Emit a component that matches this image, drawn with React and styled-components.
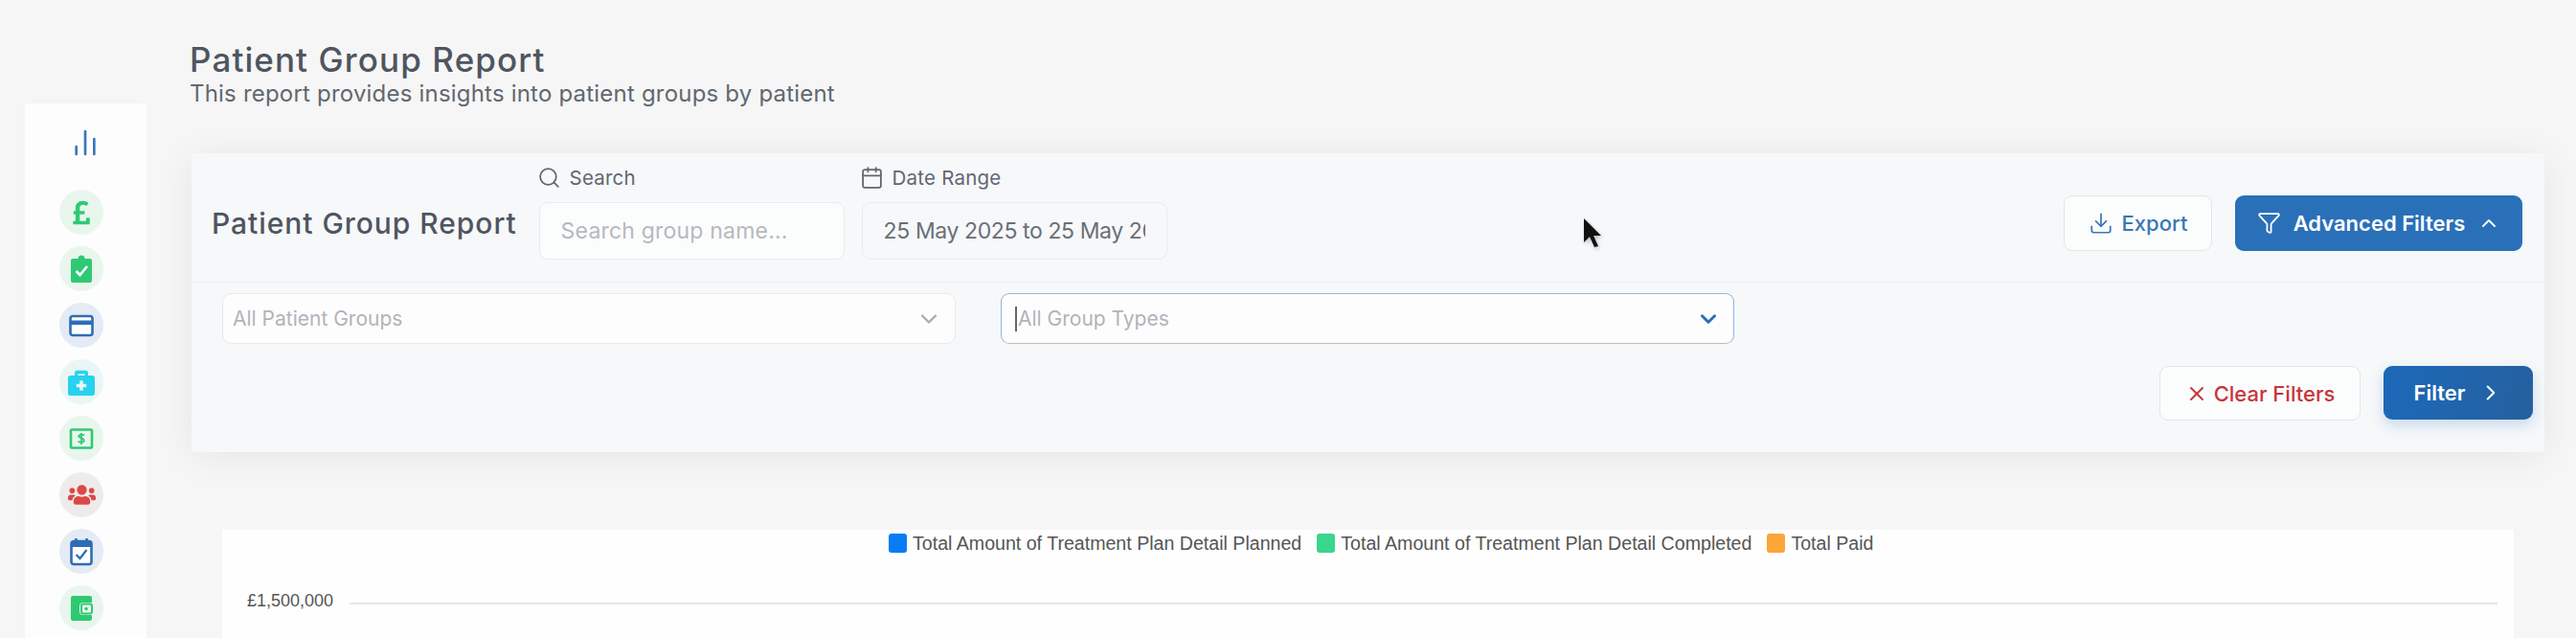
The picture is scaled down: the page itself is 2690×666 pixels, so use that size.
import React from "react";
import styled, { createGlobalStyle } from "styled-components";
import { Search, Calendar, Download, Funnel, ChevronUp, ChevronDown, ChevronRight, X, ChartNoAxesColumn } from "lucide-react";
import { FaPoundSign, FaBriefcaseMedical, FaUsers } from "react-icons/fa";

const GlobalStyle = createGlobalStyle`
  html, body {
    margin: 0;
    padding: 0;
    background: #f6f6f6;
  }
  * {
    box-sizing: border-box;
  }
`;

const Page = styled.div`
  display: flex;
  width: 2690px;
  height: 666px;
  overflow: hidden;
  position: relative;
  background: #f6f6f6;
  font-family: Inter, "Open Sans", sans-serif;
`;

const Sidebar = styled.nav`
  width: 127px;
  height: 558px;
  margin: 108px 0 0 26px;
  padding: 25px 0 0 36px;
  display: flex;
  flex-direction: column;
  flex-shrink: 0;
  background: #fdfdfd;
  box-shadow: 0 0 14px rgba(0, 0, 0, 0.015);
`;

const ChartLink = styled.div`
  display: flex;
  margin: 0 0 33px 11px;
  color: #3a76b8;
`;

const IconCircle = styled.div`
  width: 46px;
  height: 47px;
  margin-bottom: 12px;
  border-radius: 50%;
  flex-shrink: 0;
  display: flex;
  align-items: center;
  justify-content: center;
  background: ${(p) => p.$bg};
  color: ${(p) => p.$color};
`;

const Main = styled.main`
  flex: 1;
  min-width: 0;
  padding: 42px 33px 0 45px;
  display: flex;
  flex-direction: column;
`;

const PageTitle = styled.h1`
  margin: 0;
  font-size: 35px;
  line-height: 40px;
  letter-spacing: 1.1px;
  font-weight: 500;
  color: #4f5560;
`;

const PageSub = styled.p`
  margin: 0;
  font-size: 24px;
  line-height: 32px;
  letter-spacing: 0.2px;
  font-weight: 400;
  color: #62676f;
`;

const FilterCard = styled.section`
  height: 312px;
  margin: 46px 0 0 2px;
  background: #f6f8fa;
  box-shadow: 0 4px 40px rgba(0, 0, 0, 0.07);
  border-radius: 4px;
  display: flex;
  flex-direction: column;
`;

const TopRow = styled.div`
  height: 135px;
  flex-shrink: 0;
  padding: 11px 23px 0 21px;
  display: flex;
  align-items: center;
  border-bottom: 1px solid #eceef0;
`;

const CardTitle = styled.h2`
  margin: 0 23px 0 0;
  font-size: 30px;
  letter-spacing: 0.95px;
  font-weight: 500;
  white-space: nowrap;
  color: #4f5560;
`;

const Field = styled.div`
  width: 319px;
  margin-right: 18px;
  align-self: flex-start;
  margin-top: 2px;
  display: flex;
  flex-direction: column;
  gap: 14px;
`;

const FieldLabel = styled.label`
  height: 24px;
  margin-left: -2px;
  display: flex;
  align-items: center;
  gap: 9px;
  font-size: 20.5px;
  letter-spacing: 0.2px;
  color: #62676f;
`;

const TextInput = styled.input`
  width: 100%;
  height: 60px;
  padding: 0 22px;
  border: 1.5px solid #e9ebee;
  border-radius: 9px;
  background: ${(p) => p.$bg || "#fbfcfc"};
  font-family: inherit;
  font-size: 23px;
  letter-spacing: ${(p) => p.$spacing || "0.2px"};
  color: #6a6f76;
  outline: none;
  &::placeholder {
    color: #b5b9bf;
    opacity: 1;
  }
`;

const Actions = styled.div`
  margin-left: auto;
  display: flex;
  gap: 24px;
`;

const Button = styled.button`
  height: ${(p) => p.$height}px;
  width: ${(p) => p.$width}px;
  padding: 0;
  border-radius: 9px;
  display: flex;
  align-items: center;
  justify-content: center;
  gap: ${(p) => p.$gap}px;
  font-family: inherit;
  font-size: 22px;
  font-weight: 500;
  border: 1.5px solid #e3e5e8;
  background: #fbfcfc;
  color: ${(p) => p.$color};
`;

const PrimaryButton = styled(Button)`
  border: none;
  color: #fff;
  font-weight: 600;
  background: ${(p) => p.$bg};
  box-shadow: ${(p) => p.$shadow || "none"};
`;

const FilterBody = styled.div`
  flex: 1;
  padding: 11px 12px 0 32px;
  display: flex;
  flex-direction: column;
`;

const SelectRow = styled.div`
  display: flex;
  gap: 47px;
`;

const Select = styled.div`
  width: 766px;
  height: 53px;
  padding: 0 13px 0 10px;
  display: flex;
  align-items: center;
  background: #fdfdfd;
  border: 1.5px solid ${(p) => (p.$focused ? "#8ab6dc" : "#e7e9ec")};
  border-bottom-color: ${(p) => (p.$focused ? "#b9bec4" : "#e7e9ec")};
  border-radius: 9px;
  font-size: 21px;
  color: #b0b4ba;
`;

const Caret = styled.span`
  width: 2px;
  height: 26px;
  margin: 0 1px 0 4px;
  background: #666;
`;

const SelectChevron = styled.span`
  margin-left: auto;
  display: flex;
  color: ${(p) => (p.$focused ? "#2a70b8" : "#a9adb3")};
`;

const FilterActions = styled.div`
  margin-top: 23px;
  display: flex;
  justify-content: flex-end;
  gap: 24px;
`;

const ChartCard = styled.section`
  flex: 1;
  margin: 81px 32px 0 34px;
  padding-top: 4px;
  background: #fefefe;
  font-family: "Liberation Sans", Arial, sans-serif;
`;

const Legend = styled.div`
  display: flex;
  margin-left: 696px;
  height: 20px;
  align-items: center;
  font-size: 19.6px;
  color: #555;
`;

const LegendItem = styled.span`
  display: flex;
  align-items: center;
  gap: 6px;
  margin-right: 16px;
  white-space: nowrap;
`;

const Swatch = styled.i`
  width: 19px;
  height: 20px;
  border-radius: 3px;
  background: ${(p) => p.$color};
`;

const AxisRow = styled.div`
  margin: 40px 17px 0 26px;
  display: flex;
  align-items: center;
  gap: 17px;
  font-size: 18px;
  color: #555;
`;

const GridLine = styled.div`
  flex: 1;
  height: 2px;
  margin-top: 4px;
  background: #e6e6e6;
`;

const Cursor = styled.svg`
  position: absolute;
  left: 1652px;
  top: 227px;
  filter: drop-shadow(1px 2px 2px rgba(0, 0, 0, 0.25));
`;

const ClipboardIcon = () => (
  <svg width="24" height="30" viewBox="0 0 24 30">
    <path d="M3 4h5.5a3.5 3.5 0 0 1 7 0H21a2 2 0 0 1 2 2v21a2 2 0 0 1-2 2H3a2 2 0 0 1-2-2V6a2 2 0 0 1 2-2z" fill="currentColor" />
    <path d="M6.5 17l4 4 7.5-9" fill="none" stroke="#fff" strokeWidth="2.6" />
  </svg>
);

const CardIcon = () => (
  <svg width="26" height="24" viewBox="0 0 26 24">
    <rect x="1.5" y="2" width="23" height="20" rx="2.5" fill="#fff" stroke="currentColor" strokeWidth="2.6" />
    <rect x="1.5" y="6.5" width="23" height="4.5" fill="currentColor" />
  </svg>
);

const MoneyIcon = () => (
  <svg width="26" height="24" viewBox="0 0 26 24">
    <rect x="2" y="2.5" width="22" height="19" rx="1" fill="none" stroke="currentColor" strokeWidth="2.6" />
    <path d="M16 8.5c-1-1.2-5.5-1.6-5.8.7-.3 2.5 5.8 2 5.6 4.8-.2 2.2-5 2-6.2.6M13 6v12" fill="none" stroke="currentColor" strokeWidth="1.8" />
  </svg>
);

const CalendarCheckIcon = () => (
  <svg width="24" height="30" viewBox="0 0 24 30">
    <rect x="1.5" y="4" width="21" height="24" rx="2.5" fill="#fff" stroke="currentColor" strokeWidth="2.6" />
    <path d="M1.5 6.5a2.5 2.5 0 0 1 2.5-2.5h16a2.5 2.5 0 0 1 2.5 2.5V10h-21z" fill="currentColor" />
    <path d="M6.5 1v5M17.5 1v5" stroke="currentColor" strokeWidth="2.6" />
    <path d="M6.5 18l4 4 7-9" fill="none" stroke="currentColor" strokeWidth="2.2" />
  </svg>
);

const WalletIcon = () => (
  <svg width="24" height="28" viewBox="0 0 24 28">
    <path d="M3 1h18a2 2 0 0 1 2 2v5H14a4 4 0 0 0-4 4v5a4 4 0 0 0 4 4h9v4a2 2 0 0 1-2 2H3a2 2 0 0 1-2-2V3a2 2 0 0 1 2-2z" fill="currentColor" />
    <rect x="12" y="9.5" width="11" height="10" rx="2" fill="none" stroke="currentColor" strokeWidth="2" />
    <circle cx="17" cy="14.5" r="1.8" fill="currentColor" />
  </svg>
);

const GREEN = "#2fc974";
const GREEN_BG = "#e9f6ed";
const BLUE = "#2f6db5";
const BLUE_BG = "#e4ebf4";

export default function App() {
  return (
    <Page>
      <GlobalStyle />
      <Sidebar>
        <ChartLink>
          <ChartNoAxesColumn size={32} strokeWidth={2} />
        </ChartLink>
        <IconCircle $bg={GREEN_BG} $color={GREEN}><FaPoundSign size={28} /></IconCircle>
        <IconCircle $bg={GREEN_BG} $color={GREEN}><ClipboardIcon /></IconCircle>
        <IconCircle $bg={BLUE_BG} $color={BLUE}><CardIcon /></IconCircle>
        <IconCircle $bg="#eaf6f6" $color="#25d3ee"><FaBriefcaseMedical size={28} /></IconCircle>
        <IconCircle $bg={GREEN_BG} $color={GREEN}><MoneyIcon /></IconCircle>
        <IconCircle $bg="#efebeb" $color="#dc4848"><FaUsers size={29} /></IconCircle>
        <IconCircle $bg={BLUE_BG} $color={BLUE}><CalendarCheckIcon /></IconCircle>
        <IconCircle $bg={GREEN_BG} $color={GREEN}><WalletIcon /></IconCircle>
      </Sidebar>
      <Main>
        <PageTitle>Patient Group Report</PageTitle>
        <PageSub>This report provides insights into patient groups by patient</PageSub>
        <FilterCard>
          <TopRow>
            <CardTitle>Patient Group Report</CardTitle>
            <Field>
              <FieldLabel><Search size={25} strokeWidth={1.7} />Search</FieldLabel>
              <TextInput placeholder="Search group name..." />
            </Field>
            <Field>
              <FieldLabel><Calendar size={25} strokeWidth={1.7} />Date Range</FieldLabel>
              <TextInput readOnly $bg="#f6f8fa" $spacing="-0.4px" value="25 May 2025 to 25 May 2025" />
            </Field>
            <Actions>
              <Button $width={155} $height={58} $gap={9} $color="#3a78b4"><Download size={26} strokeWidth={1.6} />Export</Button>
              <PrimaryButton $width={300} $height={58} $gap={13} $bg="#2a70b8"><Funnel size={25} strokeWidth={1.7} />Advanced Filters<ChevronUp size={24} strokeWidth={1.8} /></PrimaryButton>
            </Actions>
          </TopRow>
          <FilterBody>
            <SelectRow>
              <Select>All Patient Groups<SelectChevron><ChevronDown size={28} strokeWidth={2} /></SelectChevron></Select>
              <Select $focused><Caret />All Group Types<SelectChevron $focused><ChevronDown size={26} strokeWidth={2.8} /></SelectChevron></Select>
            </SelectRow>
            <FilterActions>
              <Button $width={210} $height={57} $gap={6} $color="#c6363c"><X size={24} strokeWidth={1.9} />Clear Filters</Button>
              <PrimaryButton $width={156} $height={56} $gap={13} $bg="linear-gradient(100deg, #1c69b9, #25609f)" $shadow="0 6px 14px rgba(40, 110, 180, 0.22)">Filter<ChevronRight size={26} strokeWidth={1.9} /></PrimaryButton>
            </FilterActions>
          </FilterBody>
        </FilterCard>
        <ChartCard>
          <Legend>
            <LegendItem><Swatch $color="#0a7cf5" />Total Amount of Treatment Plan Detail Planned</LegendItem>
            <LegendItem><Swatch $color="#3ad68e" />Total Amount of Treatment Plan Detail Completed</LegendItem>
            <LegendItem><Swatch $color="#fba636" />Total Paid</LegendItem>
          </Legend>
          <AxisRow>
            £1,500,000
            <GridLine />
          </AxisRow>
        </ChartCard>
      </Main>
      <Cursor width="24" height="32" viewBox="0 0 24 32">
        <path d="M2 1l18 18h-8l5 11-4 1-5-11-6 6z" fill="#111" />
      </Cursor>
    </Page>
  );
}
